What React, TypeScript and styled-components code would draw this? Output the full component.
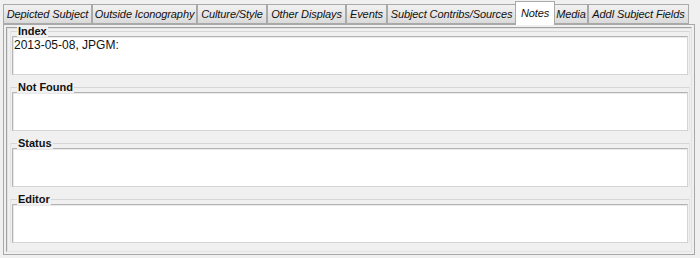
import React, { useState } from 'react'
import styled, { createGlobalStyle } from 'styled-components'

const GlobalStyle = createGlobalStyle`
  html, body {
    margin: 0;
    padding: 0;
    background: #f0f0f0;
  }
  body {
    font-family: 'Liberation Sans', Arial, sans-serif;
    font-size: 12px;
    color: #000;
  }
`

const Frame = styled.div`
  width: 700px;
  height: 258px;
  box-sizing: border-box;
  padding: 1px 5px 3px 3px;
  display: flex;
  flex-direction: column;
  background: #f0f0f0;
  overflow: hidden;
`

const TabStrip = styled.div`
  display: flex;
  align-items: flex-end;
  height: 23px;
  flex-shrink: 0;
  position: relative;
  z-index: 1;
`

const Tab = styled.div<{ $active?: boolean; $w: number }>`
  width: ${({ $w, $active }) => ($active ? $w + 2 : $w)}px;
  height: ${({ $active }) => ($active ? '24px' : '20px')};
  box-sizing: border-box;
  margin: ${({ $active }) => ($active ? '0 -1px -1px -1px' : '0')};
  display: flex;
  align-items: center;
  justify-content: center;
  padding-bottom: ${({ $active }) => ($active ? '2px' : '0')};
  font-style: italic;
  font-size: 11px;
  letter-spacing: -0.1px;
  white-space: nowrap;
  overflow: visible;
  border: 1px solid #a9a9a9;
  border-bottom: ${({ $active }) => ($active ? 'none' : '1px solid #a9a9a9')};
  background: ${({ $active }) =>
    $active ? '#ffffff' : 'linear-gradient(to bottom, #f2f2f2 0%, #e6e6e6 50%, #dadada 100%)'};
  color: #111;
  position: relative;
  z-index: ${({ $active }) => ($active ? 2 : 1)};
  cursor: default;
`

const Panel = styled.div`
  flex: 1;
  box-sizing: border-box;
  border: 1px solid #a9a9a9;
  background: #f0f0f0;
  padding: 2px;
  display: flex;
`

const Inner = styled.div`
  flex: 1;
  box-sizing: border-box;
  border: 1px solid #a0a0a0;
  border-right-color: #e3e3e3;
  border-bottom-color: #e3e3e3;
  box-shadow: inset 1px 1px 0 #e3e3e3;
  padding: 3px 1px 0 3px;
  display: flex;
  flex-direction: column;
  gap: 12px;
`

const Group = styled.div`
  position: relative;
  box-sizing: border-box;
  height: 44px;
  padding: 4px 1px 0 1px;
  border-top: 1px solid #d6d6d6;
  border-left: 1px solid #e4e4e4;
  border-right: 1px solid #e4e4e4;
`

const Legend = styled.span`
  position: absolute;
  top: -7px;
  left: 6px;
  padding: 0 1px;
  background: #f0f0f0;
  font-weight: bold;
  font-size: 11px;
  line-height: 12px;
  color: #111;
`

const Field = styled.div`
  box-sizing: border-box;
  height: 39px;
  background: #fff;
  border: 1px solid #b4b4b4;
  border-right-color: #d4d4d4;
  border-bottom-color: #d4d4d4;
  box-shadow: inset 1px 1px 0 #e8e8e8;
  padding: 1px 1px;
  font-size: 12px;
  line-height: 14px;
  color: #111;
`

const tabs = [
  { label: 'Depicted Subject', w: 89 },
  { label: 'Outside Iconography', w: 105 },
  { label: 'Culture/Style', w: 70 },
  { label: 'Other Displays', w: 79 },
  { label: 'Events', w: 41 },
  { label: 'Subject Contribs/Sources', w: 129 },
  { label: 'Notes', w: 38 },
  { label: 'Media', w: 34 },
  { label: 'Addl Subject Fields', w: 101 },
]

const fields = [
  { label: 'Index', value: '2013-05-08, JPGM:' },
  { label: 'Not Found', value: '' },
  { label: 'Status', value: '' },
  { label: 'Editor', value: '' },
]

export default function App() {
  const [active, setActive] = useState('Notes')
  return (
    <>
      <GlobalStyle />
      <Frame>
        <TabStrip>
          {tabs.map((t) => (
            <Tab
              key={t.label}
              $w={t.w}
              $active={t.label === active}
              onClick={() => setActive(t.label)}
            >
              {t.label}
            </Tab>
          ))}
        </TabStrip>
        <Panel>
          <Inner>
            {fields.map((f) => (
              <Group key={f.label}>
                <Legend>{f.label}</Legend>
                <Field>{f.value}</Field>
              </Group>
            ))}
          </Inner>
        </Panel>
      </Frame>
    </>
  )
}
